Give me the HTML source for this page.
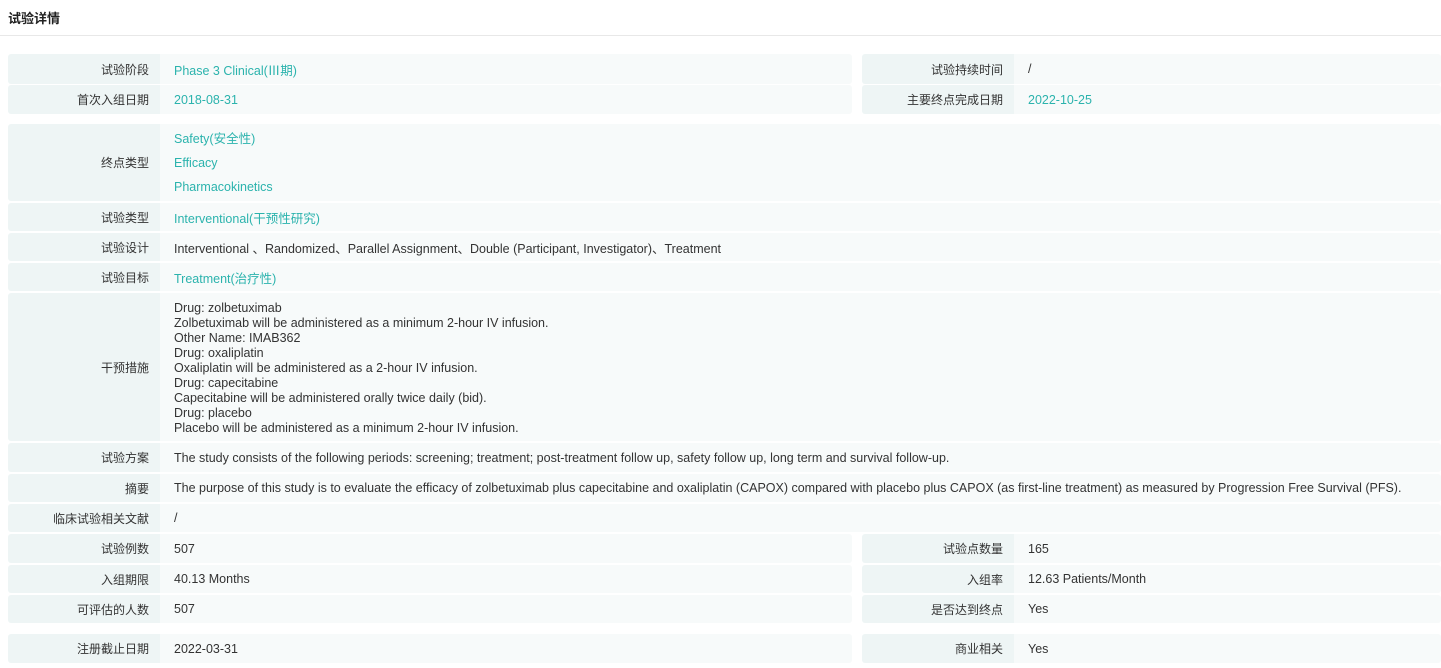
<!DOCTYPE html><html><head><meta charset="utf-8"><style>
*{margin:0;padding:0;box-sizing:border-box}
body{width:1441px;height:668px;background:#fff;font-family:"Liberation Sans","Noto Sans CJK SC",sans-serif;font-size:12px;color:#333;position:relative;overflow:hidden}
.h{position:absolute;left:8px;top:8px;font-size:13px;font-weight:bold;color:#222}
.hl{position:absolute;left:0;top:35px;width:1441px;height:1px;background:#e8e8e8}
.r{position:absolute;display:flex}
.l{background:#eef5f5;text-align:right;padding-right:11px;display:flex;align-items:center;justify-content:flex-end;border-radius:3px 0 0 3px;width:152px}
.v{background:#f7fafa;padding-left:14px;display:flex;align-items:center;border-radius:0 3px 3px 0;font-size:12.5px}
.t{color:#2bb3ad}
.ml{flex-direction:column;align-items:flex-start;justify-content:center}
</style></head><body>
<div class="h">试验详情</div><div class="hl"></div>

<div class="r" style="left:8px;top:54px;height:30px"><div class="l">试验阶段</div><div class="v t" style="width:692px">Phase 3 Clinical(Ⅲ期)</div></div>
<div class="r" style="left:862px;top:54px;height:30px"><div class="l">试验持续时间</div><div class="v" style="width:427px">/</div></div>
<div class="r" style="left:8px;top:85px;height:29px"><div class="l">首次入组日期</div><div class="v t" style="width:692px">2018-08-31</div></div>
<div class="r" style="left:862px;top:85px;height:29px"><div class="l">主要终点完成日期</div><div class="v t" style="width:427px">2022-10-25</div></div>

<div class="r" style="left:8px;top:124px;height:77px"><div class="l">终点类型</div><div class="v t ml" style="width:1281px;line-height:24px">Safety(安全性)<br>Efficacy<br>Pharmacokinetics</div></div>
<div class="r" style="left:8px;top:203px;height:28px"><div class="l">试验类型</div><div class="v t" style="width:1281px">Interventional(干预性研究)</div></div>
<div class="r" style="left:8px;top:233px;height:28px"><div class="l">试验设计</div><div class="v" style="width:1281px">Interventional 、Randomized、Parallel Assignment、Double (Participant, Investigator)、Treatment</div></div>
<div class="r" style="left:8px;top:263px;height:28px"><div class="l">试验目标</div><div class="v t" style="width:1281px">Treatment(治疗性)</div></div>
<div class="r" style="left:8px;top:293px;height:148px"><div class="l">干预措施</div><div class="v ml" style="width:1281px;line-height:15px;display:block;padding-top:8px">Drug: zolbetuximab<br>Zolbetuximab will be administered as a minimum 2-hour IV infusion.<br>Other Name: IMAB362<br>Drug: oxaliplatin<br>Oxaliplatin will be administered as a 2-hour IV infusion.<br>Drug: capecitabine<br>Capecitabine will be administered orally twice daily (bid).<br>Drug: placebo<br>Placebo will be administered as a minimum 2-hour IV infusion.</div></div>
<div class="r" style="left:8px;top:443px;height:29px"><div class="l">试验方案</div><div class="v" style="width:1281px">The study consists of the following periods: screening; treatment; post-treatment follow up, safety follow up, long term and survival follow-up.</div></div>
<div class="r" style="left:8px;top:474px;height:28px"><div class="l">摘要</div><div class="v" style="width:1281px">The purpose of this study is to evaluate the efficacy of zolbetuximab plus capecitabine and oxaliplatin (CAPOX) compared with placebo plus CAPOX (as first-line treatment) as measured by Progression Free Survival (PFS).</div></div>
<div class="r" style="left:8px;top:504px;height:28px"><div class="l">临床试验相关文献</div><div class="v" style="width:1281px">/</div></div>

<div class="r" style="left:8px;top:534px;height:29px"><div class="l">试验例数</div><div class="v" style="width:692px">507</div></div>
<div class="r" style="left:862px;top:534px;height:29px"><div class="l">试验点数量</div><div class="v" style="width:427px">165</div></div>
<div class="r" style="left:8px;top:565px;height:28px"><div class="l">入组期限</div><div class="v" style="width:692px">40.13 Months</div></div>
<div class="r" style="left:862px;top:565px;height:28px"><div class="l">入组率</div><div class="v" style="width:427px">12.63 Patients/Month</div></div>
<div class="r" style="left:8px;top:595px;height:28px"><div class="l">可评估的人数</div><div class="v" style="width:692px">507</div></div>
<div class="r" style="left:862px;top:595px;height:28px"><div class="l">是否达到终点</div><div class="v" style="width:427px">Yes</div></div>

<div class="r" style="left:8px;top:634px;height:29px"><div class="l">注册截止日期</div><div class="v" style="width:692px">2022-03-31</div></div>
<div class="r" style="left:862px;top:634px;height:29px"><div class="l">商业相关</div><div class="v" style="width:427px">Yes</div></div>
</body></html>
